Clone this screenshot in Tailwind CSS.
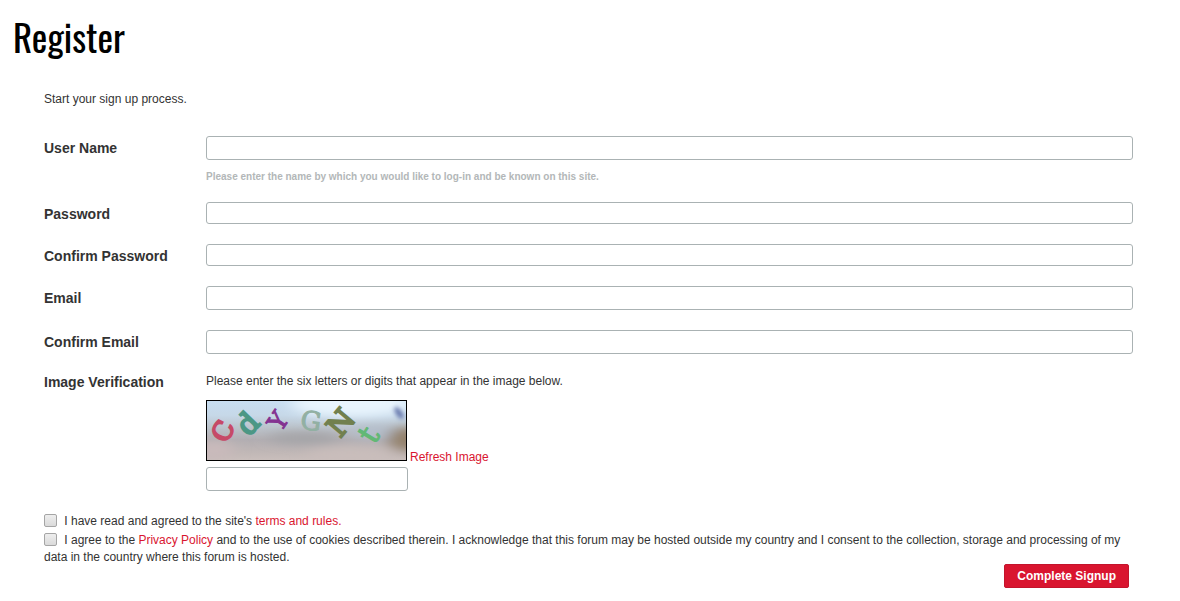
<!DOCTYPE html>
<html lang="en">

<head>
  <meta charset="UTF-8">
  <meta name="viewport" content="width=device-width, initial-scale=1.0">
  <title>Register</title>
  <script src="https://cdn.jsdelivr.net/npm/@tailwindcss/browser@4"></script>
</head>

<body class="bg-white font-['Liberation_Sans',Arial,sans-serif] text-xs text-[#333333]">
  <h1 class="pl-[13px] pt-[13px] font-['Oswald','Liberation_Sans_Narrow','Liberation_Sans',sans-serif] text-[37px] leading-[48px] text-black">Register</h1>

  <form class="pl-[44px] pr-[47px] pt-[29px]" action="#" method="post">
    <p class="leading-[18px]">Start your sign up process.</p>

    <div class="mt-7 grid grid-cols-[162px_1fr] gap-y-5">
      <label for="username" class="text-sm leading-6 font-bold">User Name</label>
      <div>
        <input id="username" type="text" class="block h-6 w-full rounded-[3px] border border-[#aab2b3] px-1" aria-describedby="username-hint">
        <p id="username-hint" class="mt-3 text-[10px] leading-[10px] font-bold text-[#b3b7b8]">Please enter the name by which you would like to log-in and be known on this site.</p>
      </div>

      <label for="password" class="text-sm leading-6 font-bold">Password</label>
      <input id="password" type="password" class="block h-[22px] w-full rounded-[3px] border border-[#aab2b3] px-1">

      <label for="password2" class="-mt-[2px] text-sm leading-6 font-bold">Confirm Password</label>
      <input id="password2" type="password" class="-mt-[2px] block h-[22px] w-full rounded-[3px] border border-[#aab2b3] px-1">

      <label for="email" class="-mt-[2px] text-sm leading-6 font-bold">Email</label>
      <input id="email" type="email" class="-mt-[2px] block h-6 w-full rounded-[3px] border border-[#aab2b3] px-1">

      <label for="email2" class="text-sm leading-6 font-bold">Confirm Email</label>
      <input id="email2" type="email" class="block h-6 w-full rounded-[3px] border border-[#aab2b3] px-1">

      <label for="captcha" class="text-sm leading-4 font-bold">Image Verification</label>
      <div>
        <p class="leading-[14px]">Please enter the six letters or digits that appear in the image below.</p>
        <div class="mt-3 flex items-end gap-[3px]">
          <svg width="201" height="61" viewBox="0 0 201 61" role="img" aria-label="Verification image" font-family="DejaVu Serif, serif" text-anchor="middle">
            <defs>
              <linearGradient id="sky" x1="0" y1="0" x2="0" y2="1">
                <stop offset="0" stop-color="#c8def2" />
                <stop offset=".25" stop-color="#c6d8e8" />
                <stop offset=".45" stop-color="#bcc4cc" />
                <stop offset=".65" stop-color="#b2aeb2" />
                <stop offset=".85" stop-color="#c0b7b6" />
                <stop offset="1" stop-color="#cabfbc" />
              </linearGradient>
              <filter id="soft" filterUnits="userSpaceOnUse" x="-60" y="-60" width="320" height="180">
                <feGaussianBlur stdDeviation="8 5" />
              </filter>
              <filter id="spot" filterUnits="userSpaceOnUse" x="170" y="-10" width="50" height="50">
                <feGaussianBlur stdDeviation="2" />
              </filter>
              <clipPath id="frame"><rect width="201" height="61" /></clipPath>
            </defs>
            <g clip-path="url(#frame)">
              <rect width="201" height="61" fill="url(#sky)" />
              <g filter="url(#soft)">
                <ellipse cx="145" cy="4" rx="60" ry="13" fill="#e8f4fd" />
                <ellipse cx="98" cy="38" rx="36" ry="6" fill="#a4a4a7" />
                <ellipse cx="167" cy="32" rx="22" ry="6" fill="#b4bfce" />
                <ellipse cx="200" cy="39" rx="18" ry="12" fill="#94826c" />
                <ellipse cx="145" cy="55" rx="45" ry="8" fill="#c9bdbb" />
                <ellipse cx="8" cy="50" rx="20" ry="10" fill="#c9babb" />
              </g>
              <ellipse cx="193" cy="13" rx="3" ry="7" fill="#6375ab" filter="url(#spot)" transform="rotate(-35 193 13)" />
              <text x="0" y="9" font-size="26" fill="#c64a67" stroke="#c64a67" stroke-width="2" transform="translate(17 31) rotate(-64)">C</text>
              <text x="0" y="11" font-size="29" fill="#4c9785" stroke="#4c9785" stroke-width="2" transform="translate(41 23) rotate(-46)">d</text>
              <text x="0" y="9" font-size="25" fill="#843391" stroke="#843391" stroke-width="1" transform="translate(72 21) rotate(-56)">Y</text>
              <text x="0" y="9" font-size="26" fill="#92b0a3" stroke="#92b0a3" transform="translate(105 21) rotate(8)">G</text>
              <text x="0" y="11" font-size="29" fill="#71804e" stroke="#71804e" stroke-width="2" transform="translate(134 22) rotate(-50)">N</text>
              <text x="0" y="10" font-size="31" fill="#62b875" stroke="#62b875" stroke-width="1" transform="translate(163 35) rotate(-58)">t</text>
            </g>
            <rect x=".5" y=".5" width="200" height="60" fill="none" stroke="#000000" />
          </svg>
          <a href="#" class="leading-2 text-[#d9152f]">Refresh Image</a>
        </div>
        <input id="captcha" type="text" class="mt-[6px] block h-6 w-[202px] rounded-[3px] border border-[#aab2b3] px-1">
      </div>
    </div>

    <div class="mt-[22px] leading-[17px]">
      <div class="mb-[2px]">
        <input id="terms" type="checkbox" class="mr-1 h-[13px] w-[13px] appearance-none rounded-[2px] border border-[#a5a5a5] bg-linear-to-b from-[#eeeeee] to-[#dadada] align-[-2px] checked:bg-[#d9152f]">
        <label for="terms">I have read and agreed to the site's <a href="#" class="text-[#d9152f]">terms and rules.</a></label>
      </div>
      <div>
        <input id="privacy" type="checkbox" class="mr-1 h-[13px] w-[13px] appearance-none rounded-[2px] border border-[#a5a5a5] bg-linear-to-b from-[#eeeeee] to-[#dadada] align-[-2px] checked:bg-[#d9152f]">
        <label for="privacy">I agree to the <a href="#" class="text-[#d9152f]">Privacy Policy</a> and to the use of cookies described therein. I acknowledge that this forum may be hosted outside my country and I consent to the collection, storage and processing of my data in the country where this forum is hosted.</label>
      </div>
    </div>

    <div class="-mt-[2px] flex justify-end pr-1">
      <button type="submit" class="h-6 rounded-[2px] border border-[#c3142c] bg-[#d9152f] px-3 font-bold text-white">Complete Signup</button>
    </div>
  </form>
</body>

</html>
